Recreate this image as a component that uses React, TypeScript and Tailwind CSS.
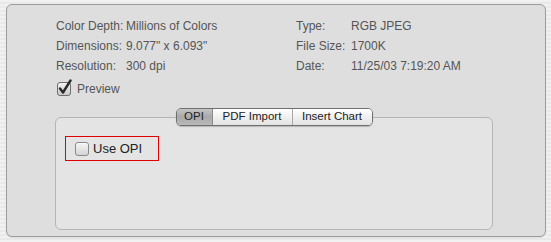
import React from 'react';

const rowsLeft = [
  ['Color Depth:', 'Millions of Colors'],
  ['Dimensions:', '9.077" x 6.093"'],
  ['Resolution:', '300 dpi'],
];

const rowsRight = [
  ['Type:', 'RGB JPEG'],
  ['File Size:', '1700K'],
  ['Date:', '11/25/03 7:19:20 AM'],
];

function InfoColumn({ rows, labelW }: { rows: string[][]; labelW: string }) {
  return (
    <div className="flex flex-col">
      {rows.map(([k, v]) => (
        <div key={k} className="flex h-5 items-center whitespace-nowrap">
          <span className={labelW}>{k}</span>
          <span>{v}</span>
        </div>
      ))}
    </div>
  );
}

export default function App() {
  return (
    <div
      className="w-[551px] h-[242px] pl-[6px] pt-[4px] bg-[repeating-linear-gradient(0deg,#f1f1f1_0px,#f1f1f1_2px,#e9e9e9_2px,#e9e9e9_4px)] text-[12px] text-[#555]"
      style={{ fontFamily: '"Liberation Sans", Arial, sans-serif' }}
    >
      <div className="w-[540px] h-[233px] rounded-[6px] border border-[#9c9c9c] bg-[#dedede] pt-[11px] shadow-[0_1px_1px_rgba(0,0,0,0.08)]">
        <div className="flex pl-[49px]">
          <div className="w-[240px]">
            <InfoColumn rows={rowsLeft} labelW="w-[70px]" />
          </div>
          <InfoColumn rows={rowsRight} labelW="w-[55px]" />
        </div>

        <div className="mt-[3px] flex h-5 items-center pl-[49px]">
          <svg width="18" height="18" viewBox="0 0 18 18" className="-mt-[2px]">
            <defs>
              <linearGradient id="cb" x1="0" y1="0" x2="0" y2="1">
                <stop offset="0" stopColor="#f4f4f4" />
                <stop offset="1" stopColor="#c9c9c9" />
              </linearGradient>
            </defs>
            <rect x="1.5" y="3.5" width="13" height="13" rx="2.5" fill="url(#cb)" stroke="#6d6d6d" />
            <path d="M4 9.5 L7 13.5 L14.5 1.5" fill="none" stroke="#2a2a2a" strokeWidth="2.4" strokeLinecap="round" strokeLinejoin="round" />
          </svg>
          <span className="ml-[3px]">Preview</span>
        </div>

        <div className="mt-[9px] pl-[48px]">
          <div className="relative z-10 flex w-[438px] justify-center">
            <div className="flex h-[18px] overflow-hidden rounded-[5px] border border-[#6f6f6f] text-[11.5px] text-[#222] shadow-[0_1px_1px_rgba(0,0,0,0.2)]">
              <div className="flex w-[36px] items-center justify-center border-r border-[#8a8a8a] bg-[linear-gradient(#c4c4c4,#a9a9a9_50%,#b9b9b9)]">
                OPI
              </div>
              <div className="flex w-[80px] items-center justify-center border-r border-[#a8a8a8] bg-[linear-gradient(#ffffff,#f0f0f0_50%,#e4e4e4)]">
                PDF Import
              </div>
              <div className="flex w-[79px] items-center justify-center bg-[linear-gradient(#ffffff,#f0f0f0_50%,#e4e4e4)]">
                Insert Chart
              </div>
            </div>
          </div>
          <div className="-mt-[9px] h-[113px] w-[438px] rounded-[6px] border border-[#b5b5b5] bg-[#e4e4e4] pl-[9px] pt-[18px]">
            <div className="flex h-[25px] w-[94px] items-center border border-[#e00000] pl-[9px]">
              <span className="h-[14px] w-[14px] rounded-[3px] border border-[#8a8a8a] bg-[linear-gradient(#f6f6f6,#d4d4d4)] shadow-[inset_0_1px_0_#fff]" />
              <span className="ml-[4px] text-[13px] text-[#222]">Use OPI</span>
            </div>
          </div>
        </div>
      </div>
    </div>
  );
}
